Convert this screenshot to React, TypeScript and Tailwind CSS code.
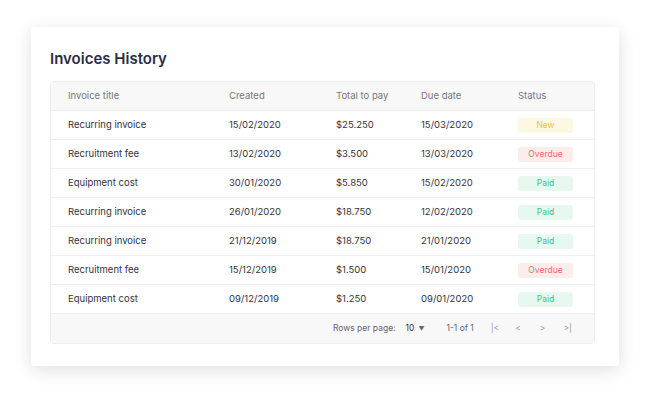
import React from "react";

const rows = [
  ["Recurring invoice", "15/02/2020", "$25.250", "15/03/2020", "New"],
  ["Recruitment fee", "13/02/2020", "$3.500", "13/03/2020", "Overdue"],
  ["Equipment cost", "30/01/2020", "$5.850", "15/02/2020", "Paid"],
  ["Recurring invoice", "26/01/2020", "$18.750", "12/02/2020", "Paid"],
  ["Recurring invoice", "21/12/2019", "$18.750", "21/01/2020", "Paid"],
  ["Recruitment fee", "15/12/2019", "$1.500", "15/01/2020", "Overdue"],
  ["Equipment cost", "09/12/2019", "$1.250", "09/01/2020", "Paid"],
];

function Badge({ s }: { s: string }) {
  const cls =
    s === "New"
      ? "bg-[#fdf8e1] text-[#e8c53a]"
      : s === "Overdue"
      ? "bg-[#fdecec] text-[#ee6b6b]"
      : "bg-[#e6f8ef] text-[#3cc483]";
  return (
    <div className={`w-[55px] h-[15px] rounded-[3px] flex items-center justify-center text-[8.5px] ${cls}`}>{s}</div>
  );
}

const cols = "grid grid-cols-[161px_107px_85px_97px_1fr] pl-[17px]";

export default function App() {
  return (
    <div className="w-[650px] h-[401px] bg-white pt-[27px] pl-[31px]" style={{ fontFamily: "Inter, 'Open Sans', sans-serif" }}>
      <div className="w-[588px] h-[339px] bg-white rounded-[3px] shadow-[0_4px_18px_rgba(0,0,0,0.13)] pt-[22px] px-[19px]">
        <div className="text-[15px] font-semibold text-[#2c2c45] leading-5 mb-[12px]">Invoices History</div>
        <div className="w-[545px] border border-[#ececee] rounded-[4px] overflow-hidden text-[9.5px] text-[#333340]">
          <div className={`${cols} h-[29px] items-center bg-[#f8f8f9] text-[#777780] border-b border-[#ececee]`}>
            <div>Invoice title</div><div>Created</div><div>Total to pay</div><div>Due date</div><div>Status</div>
          </div>
          {rows.map((r, i) => (
            <div key={i} className={`${cols} h-[29px] items-center border-b border-[#efeff1]`}>
              <div>{r[0]}</div><div>{r[1]}</div><div>{r[2]}</div><div>{r[3]}</div><div><Badge s={r[4]} /></div>
            </div>
          ))}
          <div className="h-[29px] bg-[#f8f8f9] flex items-center text-[8.5px] text-[#666670] pl-[282px]">
            <span>Rows per page:</span>
            <span className="ml-[10px] text-[#333340]">10</span>
            <span className="ml-[4px] text-[6px]">▼</span>
            <span className="ml-[22px]">1-1 of 1</span>
            <div className="flex ml-[17px] gap-[15px] text-[#999]">
              <span>|&lt;</span><span className="px-[1px]">&lt;</span><span className="px-[3px]">&gt;</span><span>&gt;|</span>
            </div>
          </div>
        </div>
      </div>
    </div>
  );
}
